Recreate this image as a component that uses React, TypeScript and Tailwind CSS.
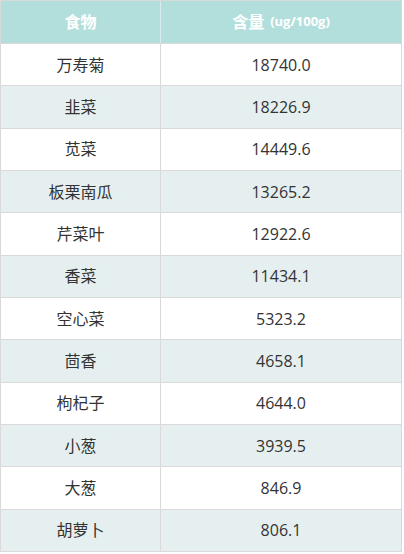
import React from "react";

const rows: [string, string][] = [
  ["万寿菊", "18740.0"],
  ["韭菜", "18226.9"],
  ["苋菜", "14449.6"],
  ["板栗南瓜", "13265.2"],
  ["芹菜叶", "12922.6"],
  ["香菜", "11434.1"],
  ["空心菜", "5323.2"],
  ["茴香", "4658.1"],
  ["枸杞子", "4644.0"],
  ["小葱", "3939.5"],
  ["大葱", "846.9"],
  ["胡萝卜", "806.1"],
];

export default function App() {
  return (
    <div
      className="w-[404px] h-[554px] bg-white"
      style={{ fontFamily: '"Open Sans", "Noto Sans CJK SC", sans-serif' }}
    >
      <div className="w-[402px] border border-[#d9d9d9] border-b-0">
        <div className="grid grid-cols-[160px_1fr] h-[42px] bg-[#b2dfdc] text-white font-bold">
          <div className="flex items-center justify-center border-r border-[#d6ebea] text-[16px]">
            食物
          </div>
          <div className="flex items-center justify-center text-[16px]">
            含量<span className="ml-1.5 text-[13px]">(ug/100g)</span>
          </div>
        </div>
        {rows.map(([name, val], i) => (
          <div
            key={name}
            className={
              "grid grid-cols-[160px_1fr] h-[42.33px] border-t border-[#d9d9d9] text-[16px] text-[#333333] " +
              (i % 2 === 1 ? "bg-[#e6eff0]" : "bg-white")
            }
          >
            <div className="flex items-center justify-center border-r border-[#d9d9d9]">
              {name}
            </div>
            <div className="flex items-center justify-center">{val}</div>
          </div>
        ))}
        <div className="border-t border-[#d9d9d9]" />
      </div>
    </div>
  );
}
